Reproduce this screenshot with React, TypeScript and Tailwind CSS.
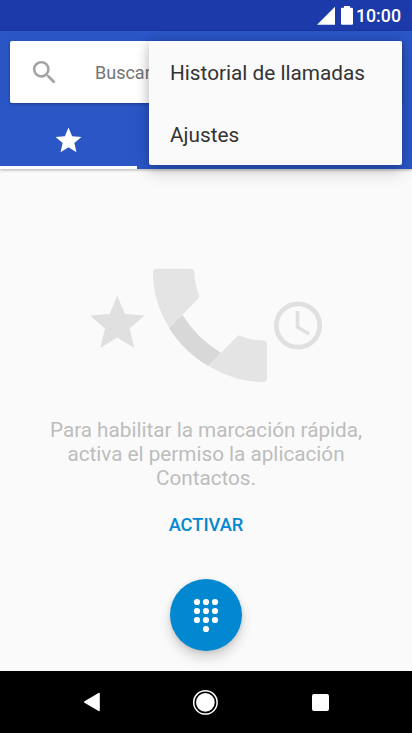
const MENU = ["Historial de llamadas", "Ajustes"];

function StatusBar() {
  return (
    <div className="flex h-[31px] shrink-0 items-center justify-end bg-[#1c3aa9] pr-[11px] text-white">
      <svg width="36" height="20" viewBox="0 0 36 20" fill="currentColor" aria-hidden="true">
        <path d="M0 18.700 18 .7v18z" />
        <path d="M27 0h6v1.800h2q1 0 1 1v14.900q0 1-1 1H25q-1 0-1-1V2.800q0-1 1-1h2z" />
      </svg>
      <span className="ml-[2.5px] pt-px text-[17.8px] font-medium leading-none">10:00</span>
    </div>
  );
}

function Illustration() {
  return (
    <svg width="232" height="115" viewBox="90 268 232 115" aria-hidden="true">
      <path
        fill="#e0e0e0"
        d="M117.200 295.800l7.800 18.200 19.600 1.500-15 13 4.700 19.600-17.100-10.500-16.900 10.500 4.700-19.600-15-13 19.700-1.500z"
      />
      <path
        fill="#d8d8d8"
        d="M182.400 314.800C192.500 330.500 204.500 342.800 221 352.700L208.200 366C193.500 357.500 178.500 343.500 169 328z"
      />
      <path
        fill="#e4e4e4"
        d="M157 268.700H190.500Q194.300 268.700 194.400 272.500C194.500 280.500 196.300 288.500 198.900 294.500Q199.700 296.500 198.200 298.500L182.400 314.800 169.400 327.800C159 311 153 293 153 272.700Q153 268.700 157 268.700z"
      />
      <path
        fill="#e4e4e4"
        d="M221 352.700L236.800 336.700Q238.300 335.100 240.300 335.800C248 339 255.500 340.500 263 340.600Q267 340.800 267 344.500V378Q267 382 263 382C243.500 382 225 376 208.200 365.600z"
      />
      <circle cx="298" cy="325.500" r="21.700" fill="none" stroke="#e0e0e0" strokeWidth="4.800" />
      <path d="M297.500 311v16l11.700 7" fill="none" stroke="#e0e0e0" strokeWidth="3.600" />
    </svg>
  );
}

function OverflowMenu() {
  return (
    <ul className="absolute left-[149px] top-[41px] w-[253px] rounded-[2px] bg-[#fafafa] shadow-[0_8px_16px_rgba(0,0,0,0.15),0_0_12px_rgba(0,0,0,0.18)]">
      {MENU.map((item) => (
        <li key={item} className="flex h-[62px] items-center pl-[21px] pt-[3px] text-[20.75px] text-[#333]">
          {item}
        </li>
      ))}
    </ul>
  );
}

function NavBar() {
  return (
    <nav className="flex h-[62px] shrink-0 items-center bg-black pl-[83px] text-white">
      <svg width="18" height="20" viewBox="0 0 18 20" fill="currentColor" aria-hidden="true">
        <path d="M1.500 9.200 15.500.900Q16.800.400 16.800 1.700v16.600q0 1.300-1.300.8L1.500 10.800q-1.200-.8 0-1.600z" />
      </svg>
      <svg width="26" height="26" viewBox="0 0 26 26" className="ml-[91px]" aria-hidden="true">
        <circle cx="13.400" cy="13.400" r="11.700" fill="none" stroke="currentColor" strokeWidth="1.500" />
        <circle cx="13.400" cy="13.400" r="9.300" fill="currentColor" />
      </svg>
      <span className="ml-[94px] h-[17px] w-[17px] rounded-[2px] bg-white" />
    </nav>
  );
}

export default function App() {
  return (
    <div className="relative flex h-[733px] w-[412px] flex-col overflow-hidden bg-[#fafafa] font-['Roboto',sans-serif]">
      <StatusBar />

      <header className="flex h-[138px] shrink-0 flex-col bg-[#2a56c6] pt-[10px] shadow-[0_1px_3px_rgba(0,0,0,0.3)]">
        <div className="mx-[10px] flex h-[62px] shrink-0 items-center rounded-[2px] bg-white shadow-[0_1px_3px_rgba(0,0,0,0.35)]">
          <svg width="31" height="31" viewBox="0 0 24 24" fill="#a3a3a3" className="ml-[19px]" aria-hidden="true">
            <path d="M15.500 14h-.79l-.28-.27A6.471 6.471 0 0 0 16 9.500 6.500 6.500 0 1 0 9.500 16c1.610 0 3.090-.59 4.230-1.570l.27.28v.79l5 4.990L20.490 19l-4.990-5zm-6 0C7.010 14 5 11.990 5 9.500S7.010 5 9.500 5 14 7.010 14 9.500 11.990 14 9.500 14z" />
          </svg>
          <span className="ml-[35px] pt-px text-[18px] text-[#757575]">Buscar</span>
        </div>
        <div className="flex flex-1">
          <div className="flex w-[137px] justify-center border-b-[3px] border-white pt-[22px]">
            <svg width="31" height="31" viewBox="0 0 24 24" fill="white" aria-hidden="true">
              <path d="M12 17.270 18.180 21l-1.640-7.030L22 9.240l-7.190-.61L12 2 9.190 8.630 2 9.240l5.460 4.730L5.820 21z" />
            </svg>
          </div>
        </div>
      </header>

      <main className="flex flex-1 flex-col items-center pt-[99px]">
        <Illustration />
        <p className="mt-[35px] text-center text-[20.7px] leading-[24px] text-[#bdbdbd]">
          Para habilitar la marcación rápida,
          <br />
          activa el permiso la aplicación
          <br />
          Contactos.
        </p>
        <button className="mt-[23px] text-[18.3px] font-medium leading-[24px] text-[#0288d1]">ACTIVAR</button>
        <button
          aria-label="Teclado"
          className="mt-[41.5px] flex h-[72px] w-[72px] items-center justify-center rounded-full bg-[#0288d1] shadow-[0_7px_12px_rgba(0,0,0,0.16),0_1px_4px_rgba(0,0,0,0.12)]"
        >
          <svg width="26" height="36" viewBox="0 0 26 36" fill="white" className="mt-[3px]" aria-hidden="true">
            {[4, 13, 22].map((y) => [4, 13, 22].map((x) => <circle key={`${x}-${y}`} cx={x} cy={y} r="3.100" />))}
            <circle cx="13" cy="31" r="3.100" />
          </svg>
        </button>
      </main>

      <NavBar />
      <OverflowMenu />
    </div>
  );
}
